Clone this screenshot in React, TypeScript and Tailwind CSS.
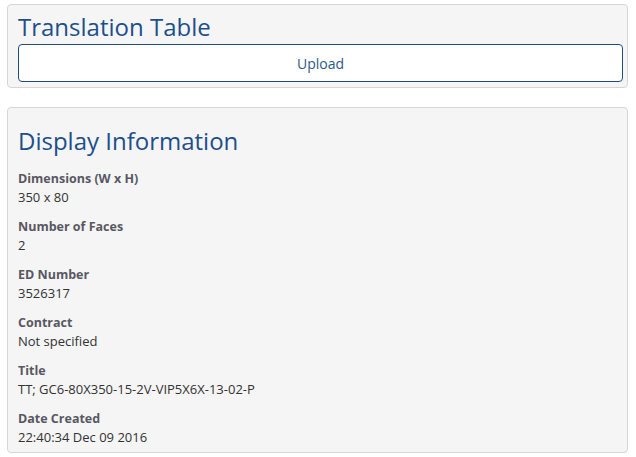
const info = [
  { label: "Dimensions (W x H)", value: "350 x 80" },
  { label: "Number of Faces", value: "2" },
  { label: "ED Number", value: "3526317" },
  { label: "Contract", value: "Not specified" },
  { label: "Title", value: "TT; GC6-80X350-15-2V-VIP5X6X-13-02-P" },
  { label: "Date Created", value: "22:40:34 Dec 09 2016" },
];

export default function App() {
  return (
    <div className="min-h-screen bg-white pt-[4px] pl-[7px] pr-[8px] font-['Open_Sans',sans-serif]">
      {/* Translation table */}
      <div className="bg-[#f5f5f5] border border-[#d6d6d6] rounded-[4px] pl-[10px] pr-[4px] pt-[10px] pb-[5px]">
        <h2 className="text-[24px] leading-[24px] text-[#1d4f8b] mb-[5px]">Translation Table</h2>
        <button className="w-full h-[38px] bg-white border border-[#1f4e7e] rounded-[4px] text-[14px] text-[#2c5a88]">
          Upload
        </button>
      </div>

      {/* Display information */}
      <div className="mt-[19px] bg-[#f5f5f5] border border-[#d6d6d6] rounded-[4px] px-[10px] pt-[17px] pb-[5px]">
        <h2 className="text-[24px] leading-[32px] text-[#1d4f8b] mb-[12px]">Display Information</h2>
        <dl>
          {info.map((item) => (
            <div key={item.label} className="mb-[10px] last:mb-0">
              <dt className="text-[12.5px] leading-[19px] font-bold text-[#585862]">{item.label}</dt>
              <dd className="text-[13px] leading-[19px] text-[#333]">{item.value}</dd>
            </div>
          ))}
        </dl>
      </div>
    </div>
  );
}
